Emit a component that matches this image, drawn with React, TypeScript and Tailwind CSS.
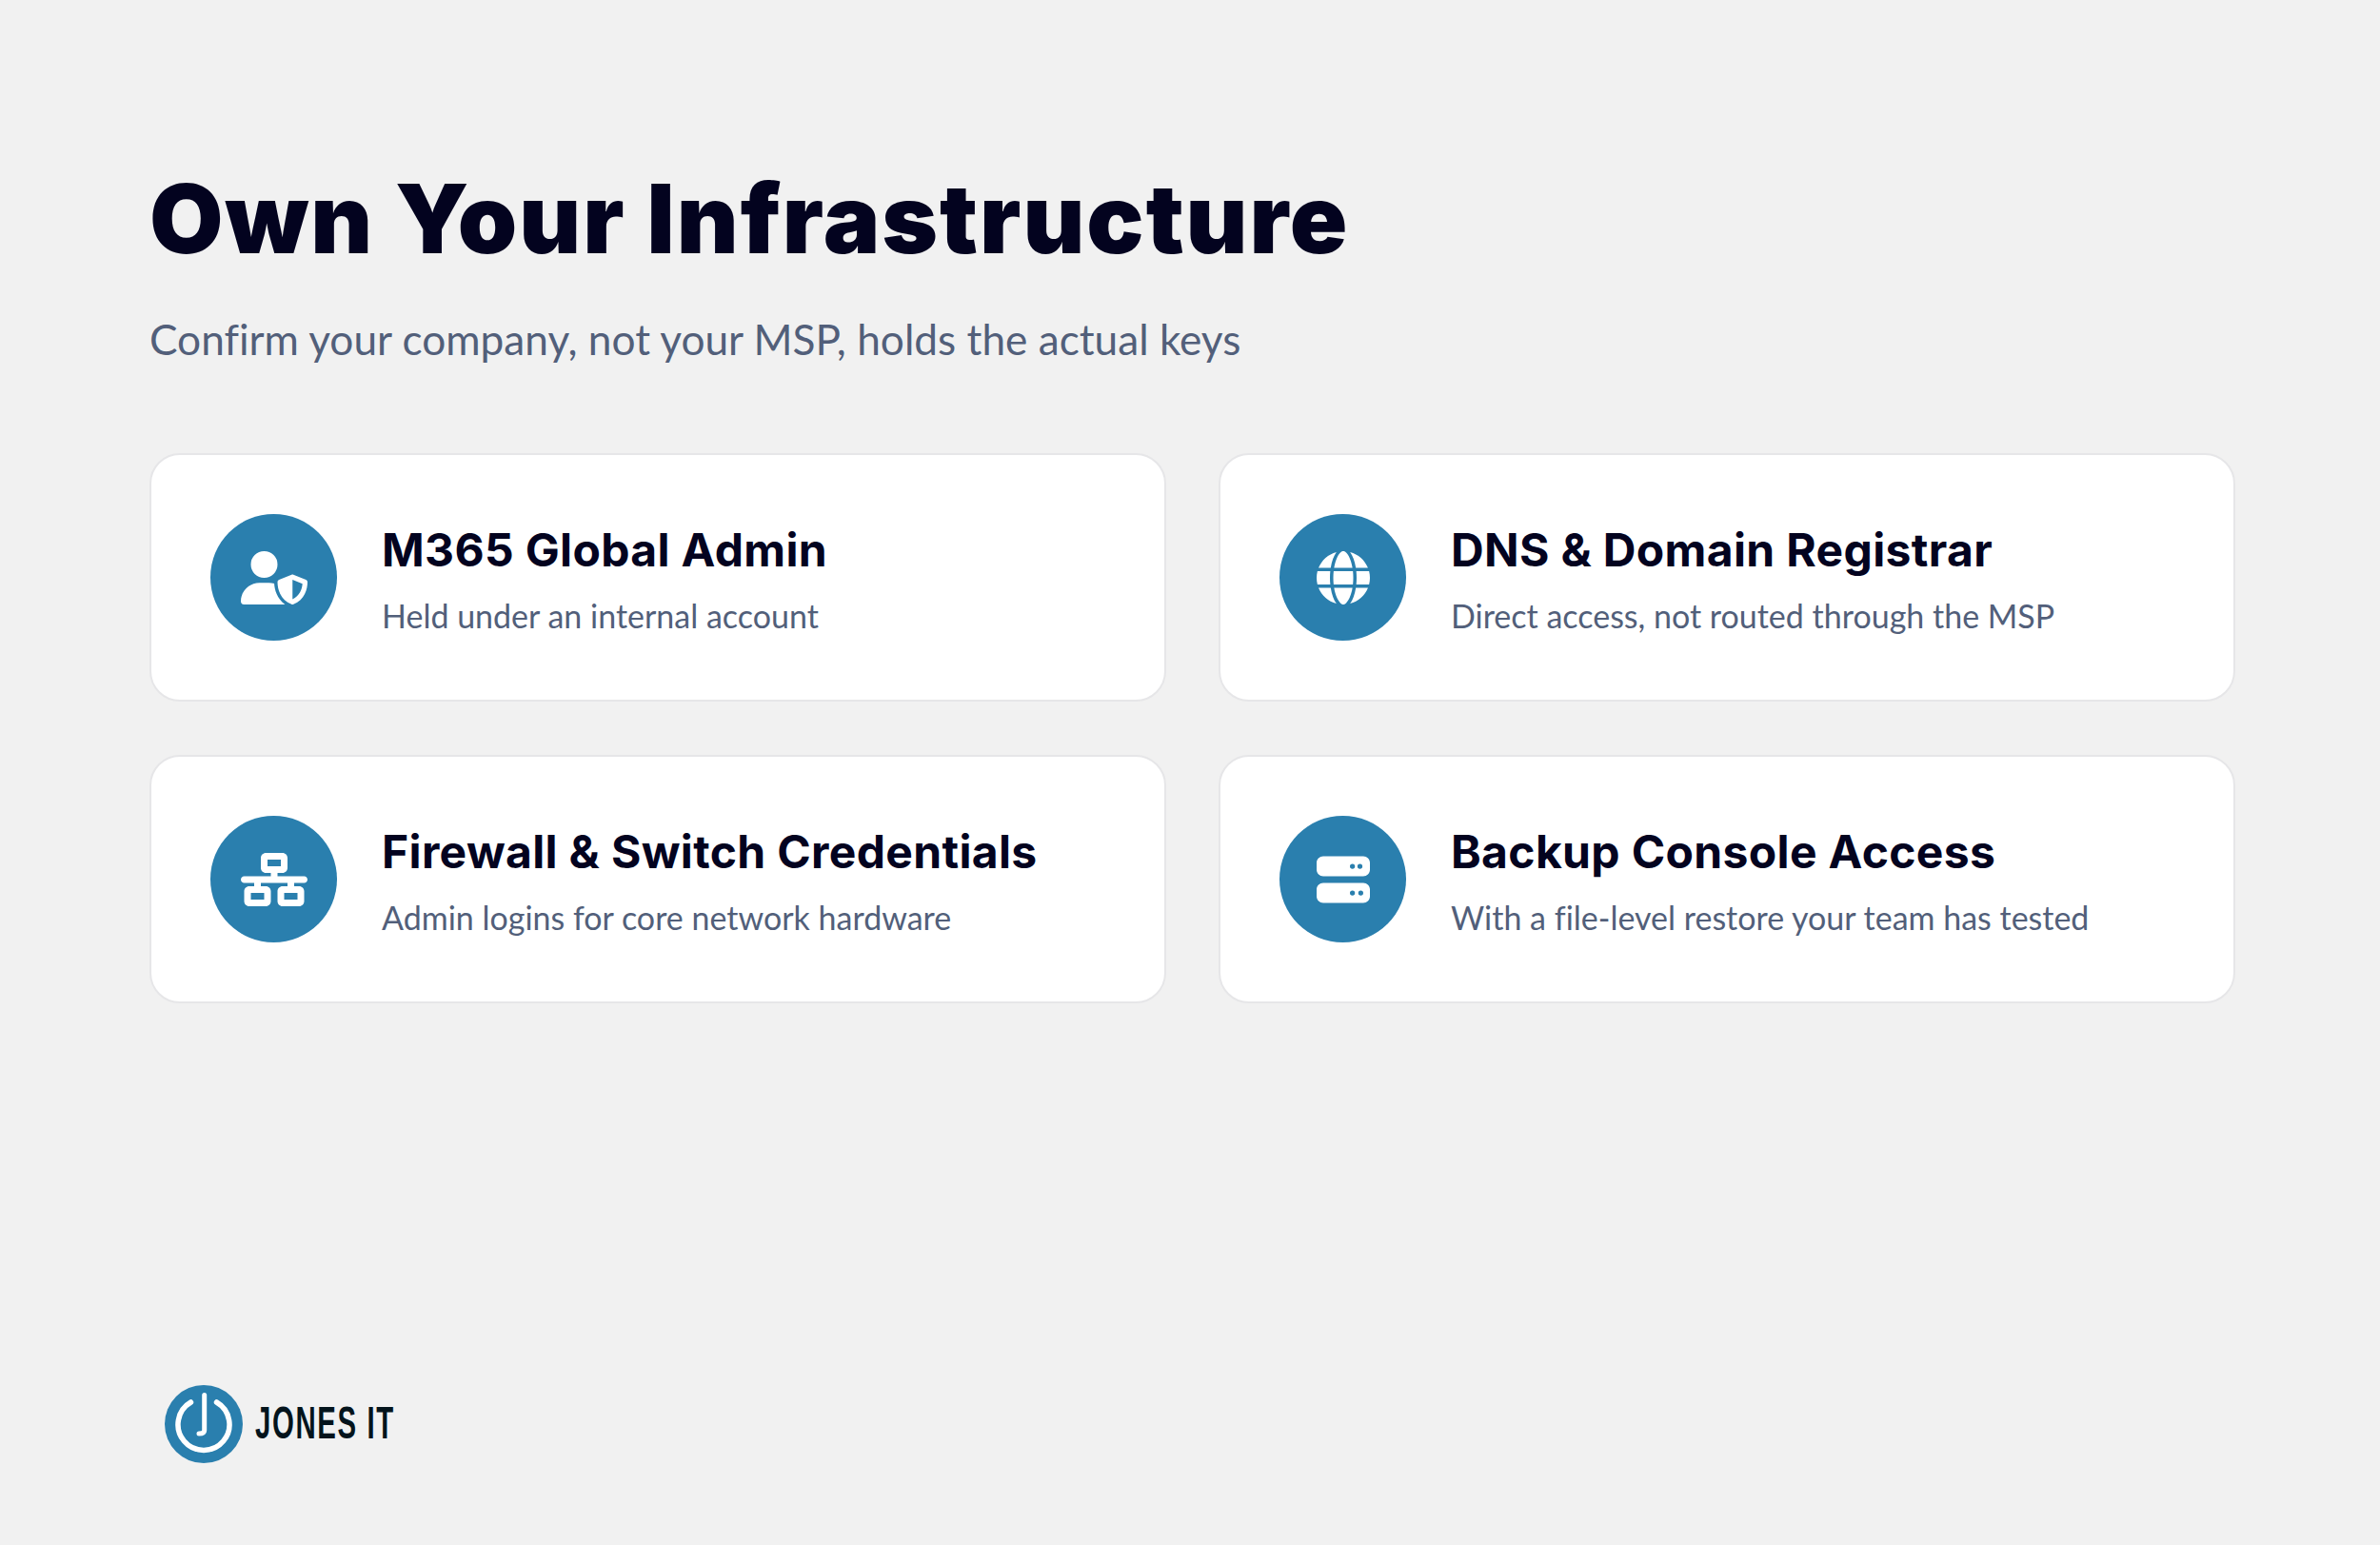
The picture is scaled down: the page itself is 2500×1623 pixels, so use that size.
import React from "react";
import { FaGlobe, FaNetworkWired, FaServer, FaUserShield } from "react-icons/fa6";

const cards = [
  { icon: FaUserShield, size: "w-[70px] h-[56px]", title: "M365 Global Admin", text: "Held under an internal account" },
  { icon: FaGlobe, size: "w-[56px] h-[56px]", title: "DNS & Domain Registrar", text: "Direct access, not routed through the MSP" },
  { icon: FaNetworkWired, size: "w-[70px] h-[56px]", title: "Firewall & Switch Credentials", text: "Admin logins for core network hardware" },
  { icon: FaServer, size: "w-[56px] h-[56px]", title: "Backup Console Access", text: "With a file-level restore your team has tested" },
];

const App = () => {
  return (
    <div className="w-[2500px] h-[1623px] bg-[#f1f1f1] flex flex-col pl-[157px] pr-[152px] pt-[167px] pb-[86px] font-['Inter',sans-serif] overflow-hidden">
      <h1 className="text-[100px] leading-[126px] font-black text-[#03031f] tracking-[2px]">
        Own Your Infrastructure
      </h1>
      <p className="mt-[36px] text-[44.2px] leading-[54px] text-[#525f7a] font-['Lato',sans-serif] [font-variant-ligatures:none]">
        Confirm your company, not your MSP, holds the actual keys
      </p>
      <div className="mt-[93px] grid grid-cols-2 gap-x-[55px] gap-y-[56px]">
        {cards.map((card) => (
          <div
            key={card.title}
            className="h-[261px] bg-white border-2 border-[#e6e6e8] rounded-[32px] flex items-center pl-[62px] gap-[47px]"
          >
            <div className="w-[133px] h-[133px] shrink-0 rounded-full bg-[#2a7fae] flex items-center justify-center text-white">
              <card.icon className={card.size} />
            </div>
            <div className="pt-[3px]">
              <h3 className="text-[48px] leading-[60px] font-[650] tracking-[0.35px] text-[#03031f]">{card.title}</h3>
              <p className="mt-[18px] text-[34px] leading-[42px] text-[#525f7a] font-['Lato',sans-serif] [font-variant-ligatures:none]">{card.text}</p>
            </div>
          </div>
        ))}
      </div>
      <div className="mt-auto flex items-center gap-[13px] pl-[16px]">
        <svg viewBox="0 0 82 82" className="w-[82px] h-[82px]">
          <circle cx="41" cy="41" r="41" fill="#2a7fae" />
          <path d="M27.5 18 A27 27 0 1 0 54.5 18" fill="none" stroke="#fff" strokeWidth="5.5" strokeLinecap="round" />
          <path d="M41.7 10.5 V47.5 Q41.7 51 36 51" fill="none" stroke="#fff" strokeWidth="5" strokeLinecap="round" />
        </svg>
        <span className="mb-[4px] text-[49px] leading-[60px] font-['Liberation_Sans',sans-serif] font-bold tracking-[2.7px] text-[#04141c] scale-x-[0.6] origin-left">
          JONES IT
        </span>
      </div>
    </div>
  );
};

export default App;
